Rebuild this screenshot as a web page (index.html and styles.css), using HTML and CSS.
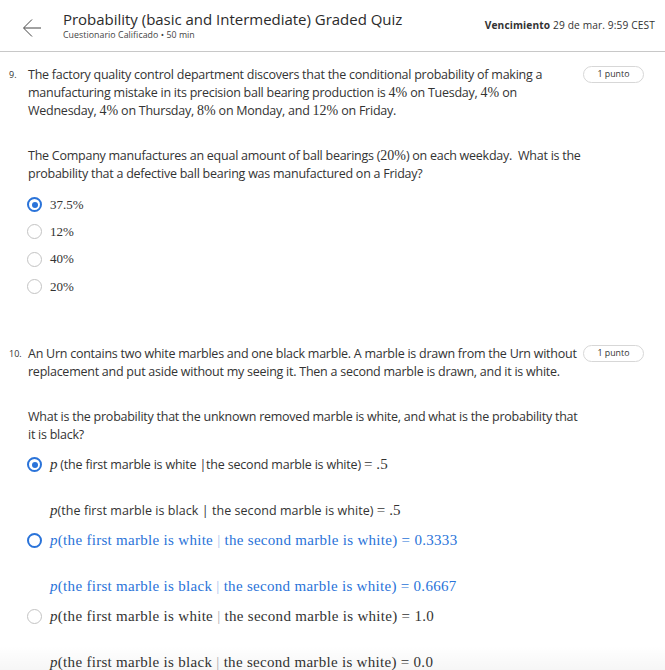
FILE: index.html
```html
<!DOCTYPE html>
<html>
<head>
<meta charset="utf-8">
<link rel="stylesheet" href="styles.css">
</head>
<body>
<header class="top">
  <svg class="back" width="20" height="20" viewBox="0 0 20 20"><path d="M19 10H2M10 1.5L1.5 10l8.5 8.5" fill="none" stroke="#444" stroke-width="1"/></svg>
  <div class="titles">
    <div class="title">Probability (basic and Intermediate) Graded Quiz</div>
    <div class="sub">Cuestionario Calificado • 50 min</div>
  </div>
  <div class="due"><b>Vencimiento</b> 29 de mar. 9:59 CEST</div>
</header>

<section class="q q9">
  <div class="qhead">
    <span class="num">9.</span>
    <div class="qtext">
      <p>The factory quality control department discovers that the conditional probability of making a manufacturing mistake in its precision ball bearing production is <span class="m">4%</span> on Tuesday, <span class="m">4%</span> on Wednesday, <span class="m">4%</span> on Thursday, <span class="m">8%</span> on Monday, and <span class="m">12%</span> on Friday.</p>
      <p class="gap">The Company manufactures an equal amount of ball bearings (<span class="m">20%</span>) on each weekday.&nbsp; What is the probability that a defective ball bearing was manufactured on a Friday?</p>
    </div>
    <span class="pill">1 punto</span>
  </div>
  <ul class="opts">
    <li class="opt"><span class="radio on"></span><span class="m">37.5%</span></li>
    <li class="opt"><span class="radio"></span><span class="m">12%</span></li>
    <li class="opt"><span class="radio"></span><span class="m">40%</span></li>
    <li class="opt"><span class="radio"></span><span class="m">20%</span></li>
  </ul>
</section>

<section class="q q10">
  <div class="qhead">
    <span class="num">10.</span>
    <div class="qtext">
      <p>An Urn contains two white marbles and one black marble. A marble is drawn from the Urn without replacement and put aside without my seeing it. Then a second marble is drawn, and it is white.</p>
      <p class="gap">What is the probability that the unknown removed marble is white, and what is the probability that it is black?</p>
    </div>
    <span class="pill">1 punto</span>
  </div>
  <div class="opts2">
    <div class="opt2"><span class="radio on"></span><span class="st1"><i class="mi">p</i> (the first marble is white |the second marble is white) <span class="ms">= .5</span></span></div>
    <div class="cont"><i class="mi">p</i>(the first marble is black | the second marble is white) <span class="ms">= .5</span></div>
    <div class="opt2 blue"><span class="radio blue-r"></span><span class="mb"><i class="mi">p</i>(the first marble is white <span class="bar">|</span> the second marble is white) = 0.3333</span></div>
    <div class="cont blue mb"><i class="mi">p</i>(the first marble is black <span class="bar">|</span> the second marble is white) = 0.6667</div>
    <div class="opt2"><span class="radio"></span><span class="mb"><i class="mi">p</i>(the first marble is white <span class="bar">|</span> the second marble is white) = 1.0</span></div>
    <div class="cont mb"><i class="mi">p</i>(the first marble is black <span class="bar">|</span> the second marble is white) = 0.0</div>
  </div>
</section>
<div class="fade"></div>
</body>
</html>
```
FILE: styles.css
```css
* { box-sizing: border-box; }
html, body { margin: 0; padding: 0; background: #fff; }
body {
  font-family: "Open Sans", sans-serif;
  color: #333;
  width: 665px;
  height: 670px;
  overflow: hidden;
  position: relative;
}
.top {
  display: flex;
  align-items: flex-start;
  height: 52px;
  border-bottom: 1px solid #c8c8c8;
  padding: 9px 10px 0 22px;
}
.back { margin-top: 9px; margin-right: 21px; }
.titles { flex: 1; }
.title {
  font-size: 15px;
  line-height: 20px;
  letter-spacing: -0.02px;
  color: #2b2b2b;
}
.sub {
  font-size: 8.8px;
  line-height: 13px;
  letter-spacing: 0.05px;
  color: #444;
}
.due {
  font-size: 10.2px;
  line-height: 14px;
  margin-top: 9px;
  letter-spacing: 0.12px;
  color: #333;
}
.due b { font-weight: 700; }

.qhead { display: flex; align-items: flex-start; }
.num {
  width: 28px;
  padding-left: 9px;
  font-size: 9px;
  line-height: 18px;
  flex: none;
}
.qtext { flex: 1; padding-right: 0; }
.qtext p {
  margin: 0;
  font-size: 12.5px;
  line-height: 18px;
  letter-spacing: -0.25px;
  color: #333;
}
.qtext p.gap { margin-top: 27px; }
.qtext .m { font-size: 14px; letter-spacing: 0; }
.pill {
  flex: none;
  margin: 0 21px 0 0;
  width: 61px;
  height: 17px;
  border: 1px solid #d7d7d7;
  border-radius: 9px;
  font-size: 8.8px;
  line-height: 15px;
  text-align: center;
  color: #333;
}
.q9 { padding-top: 14px; }
.q10 { padding-top: 45px; }

.m {
  font-family: "Liberation Serif", serif;
}
.mi { font-family: "Liberation Serif", serif; font-style: italic; font-size: 15px; }
.ms { font-family: "Liberation Serif", serif; font-size: 15px; letter-spacing: 0.1px; }
.opts { list-style: none; margin: 8px 0 0 0; padding: 0 0 0 27px; }
.opt {
  display: flex;
  align-items: center;
  height: 27.3px;
  font-size: 13px;
  color: #333;
}
.radio {
  width: 15px;
  height: 15px;
  border-radius: 50%;
  border: 1.5px solid #c3c3c3;
  margin-right: 8px;
  flex: none;
  position: relative;
}
.radio.on { border: 2px solid #2a73d9; }
.radio.on::after {
  content: "";
  position: absolute;
  left: 2.5px; top: 2.5px;
  width: 6px; height: 6px;
  border-radius: 50%;
  background: #2a73d9;
}
.radio.blue-r { border: 2px solid #2a73d9; }

.opts2 { padding-left: 27px; margin-top: 5px; }
.opt2 {
  display: flex;
  align-items: center;
  height: 31px;
  font-size: 12.5px;
  letter-spacing: -0.1px;
  color: #333;
}
.st1 { letter-spacing: -0.2px; }
.cont {
  padding-left: 23px;
  height: 14px;
  margin: 23px 0 8px;
  line-height: 14px;
  font-size: 12.5px;
  letter-spacing: 0.05px;
  color: #333;
}
.mb { font-family: "Liberation Serif", serif; font-size: 15px; letter-spacing: 0.3px; }
.cont.mb { letter-spacing: 0.3px; }
.blue, .blue .mb, .cont.blue { color: #2a73d9; }
.bar { color: #b0b0b0; }
.blue .bar { color: #a9c5ee; }
.fade {
  position: absolute;
  left: 0; right: 0; bottom: 0;
  height: 24px;
  background: linear-gradient(to bottom, rgba(0,0,0,0), rgba(0,0,0,0.035));
  pointer-events: none;
}
```
